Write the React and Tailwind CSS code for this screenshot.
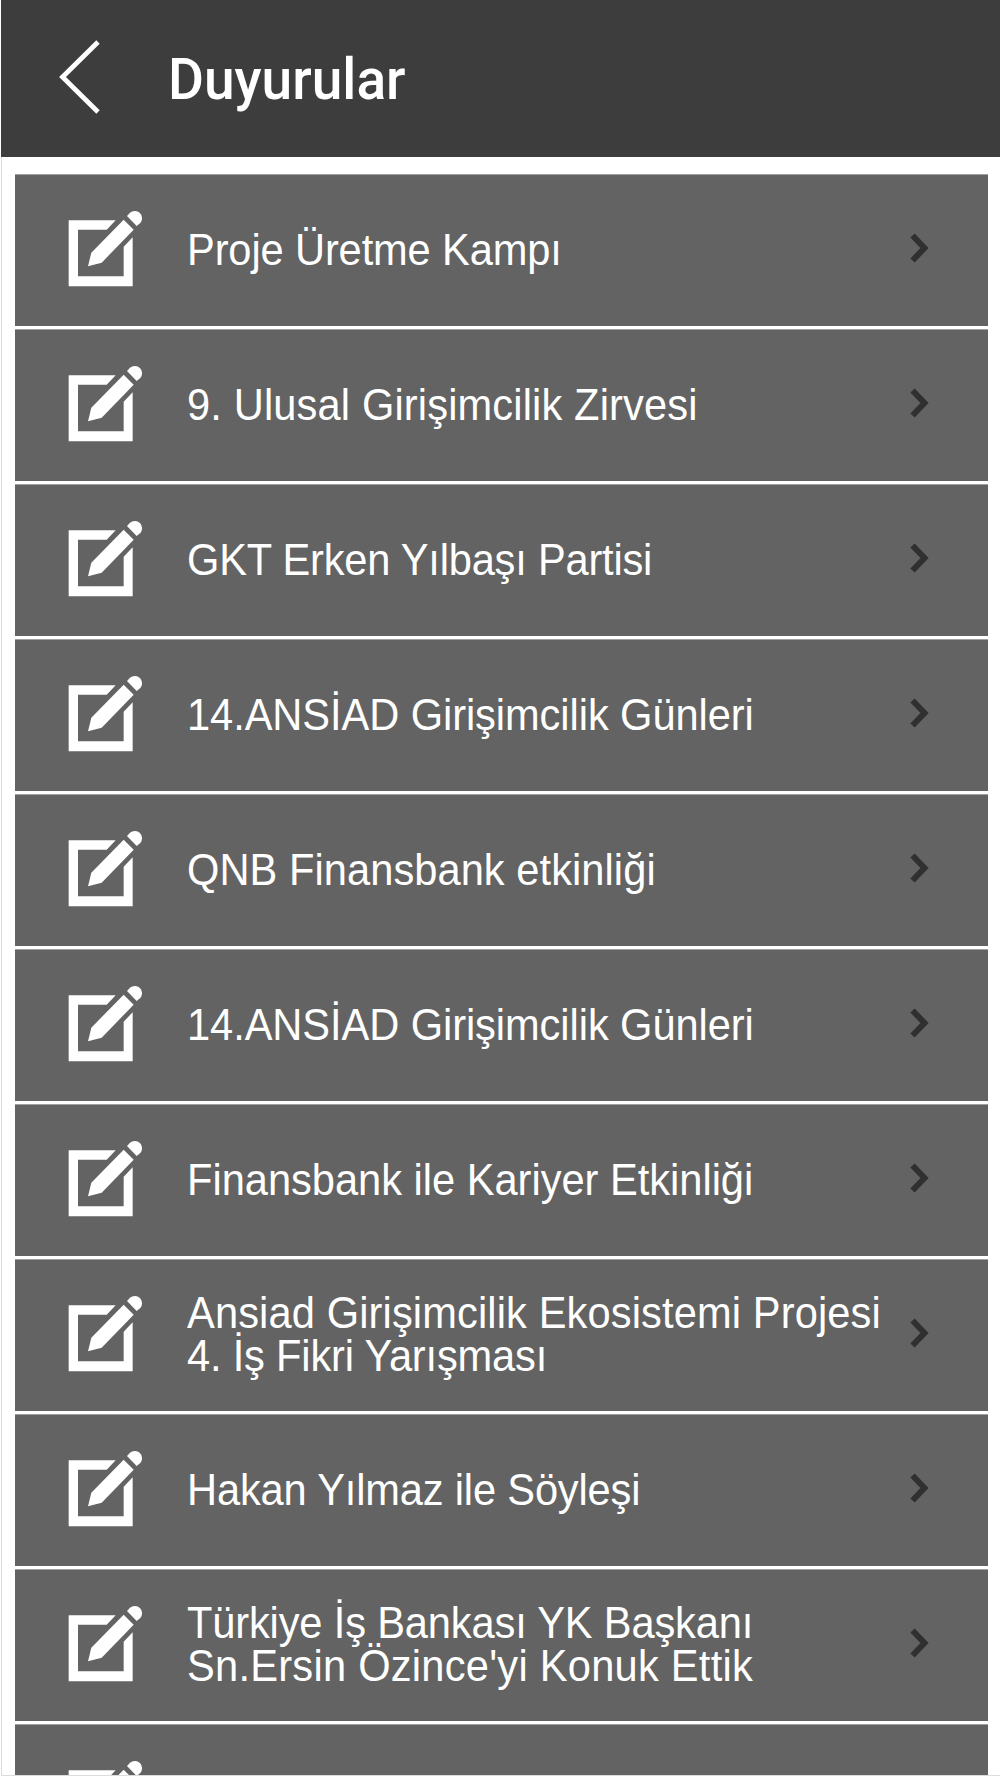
const announcements = [
  { id: 1, lines: [{ text: "Proje Üretme Kampı", tracking: "tracking-[-0.14px]" }] },
  { id: 2, lines: [{ text: "9. Ulusal Girişimcilik Zirvesi", tracking: "tracking-[0.15px]" }] },
  { id: 3, lines: [{ text: "GKT Erken Yılbaşı Partisi", tracking: "tracking-[-0.23px]" }] },
  { id: 4, lines: [{ text: "14.ANSİAD Girişimcilik Günleri", tracking: "tracking-[-0.08px]" }] },
  { id: 5, lines: [{ text: "QNB Finansbank etkinliği", tracking: "tracking-[0.06px]" }] },
  { id: 6, lines: [{ text: "14.ANSİAD Girişimcilik Günleri", tracking: "tracking-[-0.08px]" }] },
  { id: 7, lines: [{ text: "Finansbank ile Kariyer Etkinliği", tracking: "tracking-[-0.02px]" }] },
  {
    id: 8,
    lines: [
      { text: "Ansiad Girişimcilik Ekosistemi Projesi", tracking: "tracking-[0.13px]" },
      { text: "4. İş Fikri Yarışması", tracking: "tracking-[-0.2px]" },
    ],
  },
  { id: 9, lines: [{ text: "Hakan Yılmaz ile Söyleşi", tracking: "tracking-[-0.18px]" }] },
  {
    id: 10,
    lines: [
      { text: "Türkiye İş Bankası YK Başkanı", tracking: "tracking-[-0.17px]" },
      { text: "Sn.Ersin Özince'yi Konuk Ettik", tracking: "tracking-[0.27px]" },
    ],
  },
  { id: 11, lines: [] },
];

function BackIcon() {
  return (
    <svg viewBox="0 0 42 74" className="h-[74px] w-[42px] -translate-y-[2px]" fill="none" stroke="#fff" strokeWidth="4.8">
      <path d="M40 2 4.5 37 40 72" />
    </svg>
  );
}

function EditIcon() {
  return (
    <svg viewBox="0 0 225 231" className="h-[77px] w-[75px] shrink-0 -translate-y-[2px]" fill="#fff">
      <path d="M2 31H143L116 59H30V199H167V110L194 82V229H2Z" />
      <path d="M167 29 197 59 101 158 60 169 70 128Z" />
      <path d="M177 18 186 8A22 22 0 0 1 217 39L206 48Z" />
    </svg>
  );
}

function ChevronIcon() {
  return (
    <svg viewBox="0 0 20 32" className="h-8 w-5 shrink-0 -translate-y-[3px]" fill="none" stroke="#303030" strokeWidth="6">
      <path d="M2.5 3.5 14.5 16l-12 12.5" />
    </svg>
  );
}

function AnnouncementRow({ lines }) {
  return (
    <li className="flex h-[152px] shrink-0 items-center border-t border-[#a0a0a0] bg-[#636363] pl-[53px]">
      <EditIcon />
      <div
        className={`ml-[44px] w-[723px] origin-left scale-x-[0.925] font-['Liberation_Sans',sans-serif] text-[45px] leading-[43px] whitespace-nowrap text-white ${
          lines.length > 1 ? "-translate-y-[2.5px]" : "-translate-y-[1.5px]"
        }`}
      >
        {lines.map((line) => (
          <p key={line.text} className={line.tracking}>
            {line.text}
          </p>
        ))}
      </div>
      <ChevronIcon />
    </li>
  );
}

export default function App() {
  return (
    <div className="flex h-[1778px] flex-col overflow-hidden bg-white pb-[2px] pl-px">
      <header className="flex h-[157px] shrink-0 items-center bg-[#3d3d3d] pl-[57px]">
        <BackIcon />
        <h1 className="ml-[68px] origin-left scale-x-95 font-['Roboto',sans-serif] text-[58px] leading-none font-medium text-white">
          Duyurular
        </h1>
      </header>
      <main className="min-h-0 flex-1 overflow-hidden border-b border-l border-[#dcdcdc]">
        <ul className="mt-[17px] mr-[12px] ml-[13px] flex flex-col gap-[3px]">
          {announcements.map((item) => (
            <AnnouncementRow key={item.id} lines={item.lines} />
          ))}
        </ul>
      </main>
    </div>
  );
}
